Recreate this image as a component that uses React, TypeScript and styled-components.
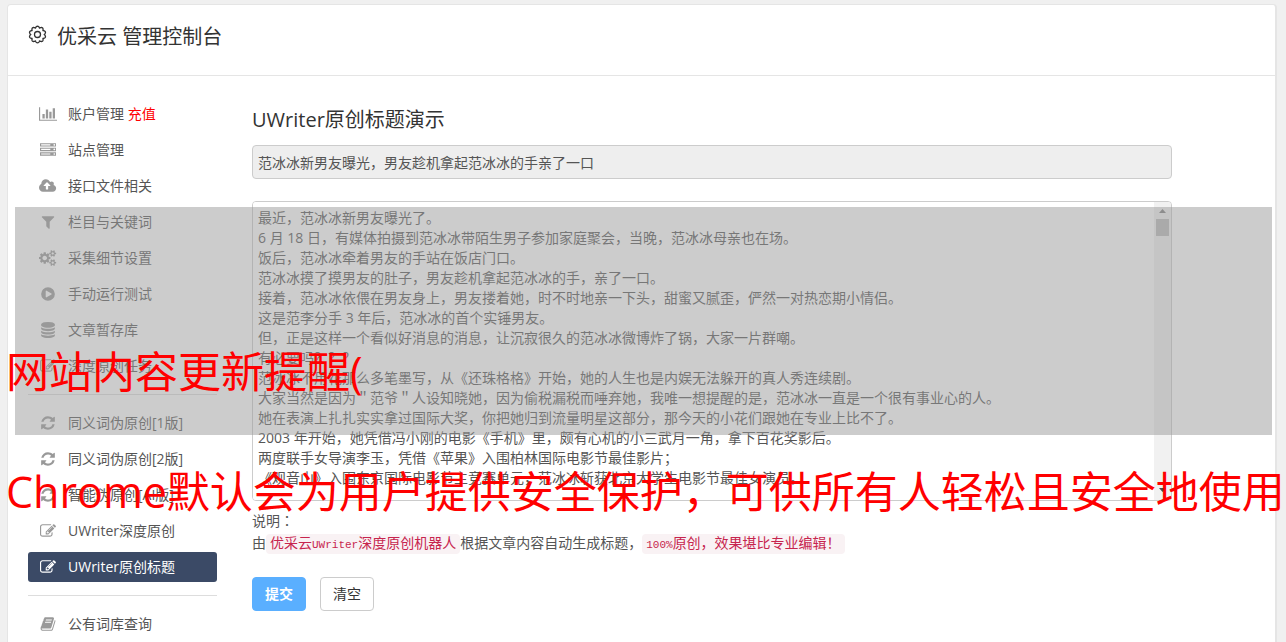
import React from "react";
import styled, { createGlobalStyle } from "styled-components";

const sans = `"Open Sans", "Noto Sans CJK SC", sans-serif`;

const GlobalStyle = createGlobalStyle`
  *, *::before, *::after { box-sizing: border-box; }
  html, body, #root { height: 100%; }
  body {
    margin: 0;
    overflow: hidden;
    background: #f0f0f0;
    color: #555;
    font: 14px/20px ${sans};
    text-spacing-trim: space-all;
  }
`;

const Page = styled.div`
  position: relative;
  height: 100%;
  padding: 4px 9px 0 7px;
  overflow: hidden;
`;

const Panel = styled.div`
  min-height: 100%;
  background: #fff;
  border: 1px solid #e5e5e5;
  border-right-width: 2px;
  border-bottom: 0;
  border-radius: 4px 4px 0 0;
`;

const Header = styled.header`
  display: flex;
  align-items: flex-start;
  gap: 10px;
  height: 71px;
  padding: 20px 20px 0;
  border-bottom: 1px solid #e5e5e5;
  color: #333;
`;

const HeaderIcon = styled.svg`
  width: 19px;
  height: 19px;
  flex: none;
`;

const Brand = styled.h1`
  margin: 0;
  font-size: 20px;
  line-height: 24px;
  font-weight: 400;
`;

const Body = styled.div`
  display: flex;
  align-items: flex-start;
  padding: 23px 103px 0 20px;
  gap: 35px;
`;

const Sidebar = styled.nav`
  flex: none;
  width: 189px;
`;

const MenuList = styled.ul`
  margin: 0;
  padding: 0;
  list-style: none;
  display: flex;
  flex-direction: column;
  gap: 6px;
`;

const Divider = styled.hr`
  margin: 13px 0;
  border: 0;
  border-top: 1px solid #ddd;
`;

const MenuLink = styled.a<{ $active?: boolean }>`
  display: flex;
  align-items: center;
  gap: 10px;
  height: 30px;
  padding: 0 10px;
  border-radius: 3px;
  text-decoration: none;
  color: ${(p) => (p.$active ? "#fff" : "#555")};
  background: ${(p) => (p.$active ? "#3b4a66" : "transparent")};
  svg { fill: ${(p) => (p.$active ? "#fff" : "#999")}; }
`;

const IconSlot = styled.span`
  display: flex;
  justify-content: center;
  flex: none;
  width: 20px;
`;

const Glyph = styled.svg`
  height: 16px;
  flex: none;
`;

const Hot = styled.span`
  color: #f00;
`;

const Main = styled.main`
  flex: 1;
  min-width: 0;
  padding-top: 8px;
`;

const Title = styled.label`
  display: block;
  margin-bottom: 12px;
  font-size: 20px;
  line-height: 26px;
  color: #333;
`;

const TitleInput = styled.input`
  display: block;
  width: 100%;
  height: 34px;
  padding: 0 5px;
  border: 1px solid #ccc;
  border-radius: 4px;
  background: #eee;
  color: #555;
  font: 14px/20px ${sans};
  text-spacing-trim: space-all;
`;

const ArticleBox = styled.div`
  display: flex;
  height: 300px;
  margin-top: 22px;
  border: 1px solid #ccc;
  border-radius: 4px;
  overflow: hidden;
`;

const ArticleText = styled.textarea`
  flex: 1;
  min-width: 0;
  padding: 6px 5px;
  border: 0;
  outline: 0;
  resize: none;
  overflow: hidden;
  background: #fff;
  color: #555;
  font: 14px/20px ${sans};
  text-spacing-trim: space-all;
`;

const ScrollRail = styled.div`
  display: flex;
  flex-direction: column;
  align-items: center;
  flex: none;
  width: 17px;
  padding: 7px 0 8px;
  background: #f1f1f1;
`;

const ScrollArrow = styled.svg`
  width: 7px;
  height: 4px;
  flex: none;
`;

const ScrollThumb = styled.div`
  width: 13px;
  height: 17px;
  margin: 6px 0 auto;
  background: #bbb;
`;

const Notes = styled.div`
  margin-top: 9px;
  line-height: 22px;
`;

const NoteLine = styled.p`
  margin: 0;
`;

/* A colon set in the middle of its square. */
const Mark = styled.span`
  font-family: "Noto Sans CJK TC", sans-serif;
  line-height: 14px;
`;

const Code = styled.code`
  padding: 2px 4px;
  border-radius: 4px;
  background: #f9f2f4;
  color: #c7254e;
  font: 14px/16px "Liberation Mono", "Noto Sans CJK SC", monospace;
`;

const CodeLatin = styled.span`
  font-size: 11px;
`;

const Actions = styled.div`
  display: flex;
  gap: 14px;
  margin-top: 23px;
`;

const Button = styled.button<{ $primary?: boolean }>`
  width: 54px;
  height: 34px;
  padding: 0;
  border: 1px solid ${(p) => (p.$primary ? "#5aafff" : "#ccc")};
  border-radius: 4px;
  background: ${(p) => (p.$primary ? "#5aafff" : "#fff")};
  color: ${(p) => (p.$primary ? "#fff" : "#333")};
  font: ${(p) => (p.$primary ? 700 : 400)} 14px/20px ${sans};
`;

const Shade = styled.div`
  position: absolute;
  top: 207px;
  left: 15px;
  right: 14px;
  height: 228px;
  background: rgba(153, 153, 153, 0.5);
  pointer-events: none;
`;

const Caption = styled.p<{ $top: number }>`
  position: absolute;
  top: ${(p) => p.$top}px;
  left: 6px;
  margin: 0;
  color: #f00;
  font-size: 43px;
  line-height: 60px;
  white-space: nowrap;
  pointer-events: none;
`;

type IconDef = { w: number; d: string };

const icons: Record<string, IconDef> = {
  chart: {
    w: 2048,
    d: "M640 896v512h-256v-512h256zm384-512v1024h-256v-1024h256zm1024 1152v128h-2048v-1536h128v1408h1920zm-640-896v768h-256v-768h256zm384-384v1152h-256v-1152h256z",
  },
  server: {
    w: 1792,
    d: "M128 1408h1024v-128h-1024v128zm0-512h1024v-128h-1024v128zm1568 448q0-40-28-68t-68-28-68 28-28 68 28 68 68 28 68-28 28-68zm-1568-960h1024v-128h-1024v128zm1568 448q0-40-28-68t-68-28-68 28-28 68 28 68 68 28 68-28 28-68zm0-512q0-40-28-68t-68-28-68 28-28 68 28 68 68 28 68-28 28-68zm96 832v384h-1792v-384h1792zm0-512v384h-1792v-384h1792zm0-512v384h-1792v-384h1792z",
  },
  cloud: {
    w: 1920,
    d: "M1280 864q0-14-9-23l-352-352q-9-9-23-9t-23 9l-351 351q-10 12-10 24 0 14 9 23t23 9h224v352q0 13 9.500 22.500t22.500 9.500h192q13 0 22.500-9.500t9.500-22.500v-352h224q13 0 22.500-9.500t9.500-22.500zm640 288q0 159-112.500 271.500t-271.500 112.500h-1088q-185 0-316.500-131.500t-131.500-316.500q0-130 70-240t188-165q-2-30-2-43 0-212 150-362t362-150q156 0 285.500 87t188.500 231q71-62 166-62 106 0 181 75t75 181q0 76-41 138 130 31 213.500 135.500t83.500 238.500z",
  },
  filter: {
    w: 1792,
    d: "M1595 295q17 41-14 70l-493 493v742q0 42-39 59-13 5-25 5-27 0-45-19l-256-256q-19-19-19-45v-486l-493-493q-31-29-14-70 17-39 59-39h1280q42 0 59 39z",
  },
  cogs: {
    w: 1920,
    d: "M896 896q0-106-75-181t-181-75-181 75-75 181 75 181 181 75 181-75 75-181zm768 512q0-52-38-90t-90-38-90 38-38 90q0 53 37.500 90.500t90.500 37.500 90.500-37.500 37.500-90.500zm0-1024q0-52-38-90t-90-38-90 38-38 90q0 53 37.500 90.500t90.500 37.500 90.500-37.500 37.500-90.500zm-384 421v185q0 10-7 19.500t-16 10.500l-155 24q-11 35-32 76 34 48 90 115 7 11 7 20 0 12-7 19-23 30-82.500 89.500t-78.500 59.500q-11 0-21-7l-115-90q-37 19-77 31-11 108-23 155-7 24-30 24h-186q-11 0-20-7.500t-10-17.500l-23-153q-34-10-75-31l-118 89q-7 7-20 7-11 0-21-8-144-133-144-160 0-9 7-19 10-14 41-53t47-61q-23-44-35-82l-152-24q-10-1-17-9.500t-7-19.500v-185q0-10 7-19.500t16-10.500l155-24q11-35 32-76-34-48-90-115-7-11-7-20 0-12 7-20 22-30 82-89t79-59q11 0 21 7l115 90q34-18 77-32 11-108 23-154 7-24 30-24h186q11 0 20 7.500t10 17.500l23 153q34 10 75 31l118-89q8-7 20-7 11 0 21 8 144 133 144 160 0 8-7 19-12 16-42 54t-45 60q23 48 34 82l152 23q10 2 17 10.500t7 19.500zm640 533v140q0 16-149 31-12 27-30 52 51 113 51 138 0 4-4 7-122 71-124 71-8 0-46-47t-52-68q-20 2-30 2t-30-2q-14 21-52 68t-46 47q-2 0-124-71-4-3-4-7 0-25 51-138-18-25-30-52-149-15-149-31v-140q0-16 149-31 13-29 30-52-51-113-51-138 0-4 4-7 4-2 35-20t59-34 30-16q8 0 46 46.500t52 67.500q20-2 30-2t30 2q51-71 92-112l6-2q4 0 124 70 4 3 4 7 0 25-51 138 17 23 30 52 149 15 149 31zm0-1024v140q0 16-149 31-12 27-30 52 51 113 51 138 0 4-4 7-122 71-124 71-8 0-46-47t-52-68q-20 2-30 2t-30-2q-14 21-52 68t-46 47q-2 0-124-71-4-3-4-7 0-25 51-138-18-25-30-52-149-15-149-31v-140q0-16 149-31 13-29 30-52-51-113-51-138 0-4 4-7 4-2 35-20t59-34 30-16q8 0 46 46.500t52 67.500q20-2 30-2t30 2q51-71 92-112l6-2q4 0 124 70 4 3 4 7 0 25-51 138 17 23 30 52 149 15 149 31z",
  },
  play: {
    w: 1792,
    d: "M1312 896q0 37-32 55l-544 320q-15 9-32 9-16 0-32-8-32-19-32-56v-640q0-37 32-56 33-18 64 1l544 320q32 18 32 55zm-416-768a768 768 0 1 1 0 1536a768 768 0 1 1 0-1536z",
  },
  database: {
    w: 1792,
    d: "M896 768q237 0 443-43t325-127v170q0 69-103 128t-280 93.500-385 34.500-385-34.500-280-93.500-103-128v-170q119 84 325 127t443 43zm0 768q237 0 443-43t325-127v170q0 69-103 128t-280 93.500-385 34.500-385-34.500-280-93.500-103-128v-170q119 84 325 127t443 43zm0-384q237 0 443-43t325-127v170q0 69-103 128t-280 93.500-385 34.500-385-34.500-280-93.500-103-128v-170q119 84 325 127t443 43zm0-1152q208 0 385 34.500t280 93.500 103 128v128q0 69-103 128t-280 93.500-385 34.500-385-34.500-280-93.500-103-128v-128q0-69 103-128t280-93.500 385-34.500z",
  },
  refresh: {
    w: 1792,
    d: "M1639 1056q0 5-1 7-64 268-268 434.500t-478 166.500q-146 0-282.500-55t-243.500-157l-129 129q-19 19-45 19t-45-19-19-45v-448q0-26 19-45t45-19h448q26 0 45 19t19 45-19 45l-137 137q71 66 161 102t187 36q134 0 250-65t186-179q11-17 53-117 8-23 30-23h192q13 0 22.500 9.500t9.500 22.500zm25-800v448q0 26-19 45t-45 19h-448q-26 0-45-19t-19-45 19-45l138-138q-148-137-349-137-134 0-250 65t-186 179q-11 17-53 117-8 23-30 23h-199q-13 0-22.500-9.500t-9.500-22.500v-7q65-268 270-434.500t480-166.500q146 0 284 55.500t245 156.500l130-129q19-19 45-19t45 19 19 45z",
  },
  edit: {
    w: 1792,
    d: "M888 1184l116-116-152-152-116 116v56h96v96h56zm440-720q-16-16-33 1l-350 350q-17 17-1 33t33-1l350-350q17-17 1-33zm80 594v190q0 119-84.500 203.500t-203.500 84.500h-832q-119 0-203.500-84.500t-84.500-203.500v-832q0-119 84.500-203.500t203.500-84.500h832q63 0 117 25 15 7 18 23 3 17-9 29l-49 49q-14 14-32 8-23-6-45-6h-832q-66 0-113 47t-47 113v832q0 66 47 113t113 47h832q66 0 113-47t47-113v-126q0-13 9-22l64-64q15-15 35-7t20 29zm-96-738l288 288-672 672h-288v-288zm444 132l-92 92-288-288 92-92q28-28 68-28t68 28l152 152q28 28 28 68t-28 68z",
  },
  book: {
    w: 1792,
    d: "M1703 478q40 57 18 129l-275 906q-19 64-76.500 107.500t-122.500 43.500h-923q-77 0-148.500-53.500t-99.500-131.500q-24-67-2-127 0-4 3-27t4-37q1-8-3-21.500t-3-19.500q2-11 8-21t16.500-23.500 16.500-23.500q23-38 45-91.500t30-91.500q3-10 .5-30t-.5-28q3-11 17-28t17-23q21-36 42-92t25-90q1-9-2.500-32t.5-28q4-13 22-30.500t22-22.500q19-26 42.500-84.500t27.500-96.500q1-8-3-25.500t-2-26.500q2-8 9-18t18-23 17-21q8-12 16.500-30.500t15-35 16-36 19.500-32 26.500-23.500 36-11.500 47.500 5.500l-1 3q38-9 51-9h761q74 0 114 56t18 130l-274 906q-36 119-71.500 153.500t-128.500 34.500h-869q-27 0-38 15-11 16-1 43 24 70 144 70h923q29 0 56-15.500t35-41.500l300-987q7-22 5-57 38 15 59 43zm-1064 2q-4 13 2 22.500t20 9.500h608q13 0 25.500-9.500t16.500-22.500l21-64q4-13-2-22.500t-20-9.500h-608q-13 0-25.500 9.500t-16.500 22.500zm-83 256q-4 13 2 22.500t20 9.500h608q13 0 25.500-9.500t16.500-22.500l21-64q4-13-2-22.500t-20-9.500h-608q-13 0-25.500 9.500t-16.500 22.500z",
  },
};

function Icon({ name }: { name: string }) {
  const { w, d } = icons[name];
  return (
    <IconSlot>
      <Glyph viewBox={`0 0 ${w} 1792`} aria-hidden="true">
        <path d={d} fillRule="evenodd" />
      </Glyph>
    </IconSlot>
  );
}

type Item = { icon: string; label: string; hot?: string; active?: boolean };

const groups: Item[][] = [
  [
    { icon: "chart", label: "账户管理", hot: "充值" },
    { icon: "server", label: "站点管理" },
    { icon: "cloud", label: "接口文件相关" },
    { icon: "filter", label: "栏目与关键词" },
    { icon: "cogs", label: "采集细节设置" },
    { icon: "play", label: "手动运行测试" },
    { icon: "database", label: "文章暂存库" },
    { icon: "edit", label: "深度原创任务" },
  ],
  [
    { icon: "refresh", label: "同义词伪原创[1版]" },
    { icon: "refresh", label: "同义词伪原创[2版]" },
    { icon: "refresh", label: "智能伪原创[AI版]" },
    { icon: "edit", label: "UWriter深度原创" },
    { icon: "edit", label: "UWriter原创标题", active: true },
  ],
  [{ icon: "book", label: "公有词库查询" }],
];

const article = [
  "最近，范冰冰新男友曝光了。",
  "6 月 18 日，有媒体拍摄到范冰冰带陌生男子参加家庭聚会，当晚，范冰冰母亲也在场。",
  "饭后，范冰冰牵着男友的手站在饭店门口。",
  "范冰冰摸了摸男友的肚子，男友趁机拿起范冰冰的手，亲了一口。",
  "接着，范冰冰依偎在男友身上，男友搂着她，时不时地亲一下头，甜蜜又腻歪，俨然一对热恋期小情侣。",
  "这是范李分手 3 年后，范冰冰的首个实锤男友。",
  "但，正是这样一个看似好消息的消息，让沉寂很久的范冰冰微博炸了锅，大家一片群嘲。",
  "有必要吗？？？",
  "范冰冰不用花那么多笔墨写，从《还珠格格》开始，她的人生也是内娱无法躲开的真人秀连续剧。",
  "大家当然是因为＂范爷＂人设知晓她，因为偷税漏税而唾弃她，我唯一想提醒的是，范冰冰一直是一个很有事业心的人。",
  "她在表演上扎扎实实拿过国际大奖，你把她归到流量明星这部分，那今天的小花们跟她在专业上比不了。",
  "2003 年开始，她凭借冯小刚的电影《手机》里，颇有心机的小三武月一角，拿下百花奖影后。",
  "两度联手女导演李玉，凭借《苹果》入围柏林国际电影节最佳影片；",
  "《观音山》入围东京国际电影节主竞赛单元，范冰冰斩获北京大学生电影节最佳女演员。",
].join("\n");

/* Outline of a cog with rounded teeth around a centre point. */
function cogPath(teeth: number, radius: number, depth: number, centre: number) {
  const steps = teeth * 12;
  const points: string[] = [];
  for (let i = 0; i < steps; i++) {
    const a = (i / steps) * Math.PI * 2;
    const wave = (Math.abs(Math.cos((a * teeth) / 2)) * 2 - 1) * depth;
    const r = radius + wave;
    points.push(`${(centre + r * Math.sin(a)).toFixed(2)} ${(centre - r * Math.cos(a)).toFixed(2)}`);
  }
  return `M${points.join("L")}Z`;
}

export default function App() {
  return (
    <>
      <GlobalStyle />
      <Page>
        <Panel>
          <Header>
            <HeaderIcon viewBox="0 0 19 19" fill="none" stroke="#333" strokeWidth="1.3" aria-hidden="true">
              <path d={cogPath(10, 7.5, 0.8, 9.5)} strokeLinejoin="round" />
              <circle cx="9.5" cy="9.5" r="3" />
            </HeaderIcon>
            <Brand>优采云 管理控制台</Brand>
          </Header>
          <Body>
            <Sidebar>
              {groups.map((group, g) => (
                <React.Fragment key={g}>
                  {g > 0 && <Divider />}
                  <MenuList>
                    {group.map((item) => (
                      <li key={item.label}>
                        <MenuLink href="#" $active={item.active}>
                          <Icon name={item.icon} />
                          <span>
                            {item.label}
                            {item.hot && <Hot> {item.hot}</Hot>}
                          </span>
                        </MenuLink>
                      </li>
                    ))}
                  </MenuList>
                </React.Fragment>
              ))}
            </Sidebar>
            <Main>
              <Title htmlFor="title">UWriter原创标题演示</Title>
              <TitleInput id="title" readOnly value="范冰冰新男友曝光，男友趁机拿起范冰冰的手亲了一口" />
              <ArticleBox>
                <ArticleText aria-label="文章内容" defaultValue={article} />
                <ScrollRail aria-hidden="true">
                  <ScrollArrow viewBox="0 0 7 4" fill="#808080">
                    <path d="M3.500 0L7 4H0z" />
                  </ScrollArrow>
                  <ScrollThumb />
                  <ScrollArrow viewBox="0 0 7 4" fill="#505050">
                    <path d="M0 0H7L3.500 4z" />
                  </ScrollArrow>
                </ScrollRail>
              </ArticleBox>
              <Notes>
                <NoteLine>
                  说明<Mark>：</Mark>
                </NoteLine>
                <NoteLine>
                  由
                  <Code>
                    优采云<CodeLatin>UWriter</CodeLatin>深度原创机器人
                  </Code>
                  根据文章内容自动生成标题，
                  <Code>
                    <CodeLatin>100%</CodeLatin>原创，效果堪比专业编辑！
                  </Code>
                </NoteLine>
              </Notes>
              <Actions>
                <Button type="submit" $primary>提交</Button>
                <Button type="button">清空</Button>
              </Actions>
            </Main>
          </Body>
        </Panel>
        <Shade />
        <Caption $top={342}>网站内容更新提醒(</Caption>
        <Caption $top={462}>Chrome默认会为用户提供安全保护，可供所有人轻松且安全地使用</Caption>
      </Page>
    </>
  );
}
